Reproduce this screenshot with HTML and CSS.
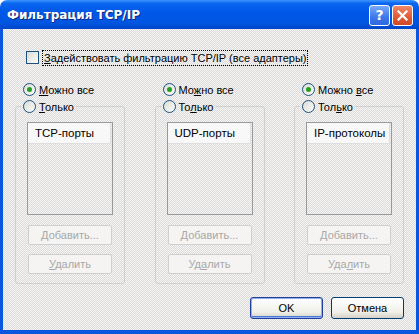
FILE: index.html
```html
<!DOCTYPE html>
<html>
<head>
  <meta charset="UTF-8">
  <title>Фильтрация TCP/IP</title>
  <link rel="stylesheet" href="styles.css">
</head>
<body>
<div class="window">
  <div class="titlebar">
    <span class="caption">Фильтрация TCP/IP</span>
    <div class="capButtons">
      <span class="capBtn help">?</span>
      <span class="capBtn close">
        <svg width="11" height="11" viewBox="0 0 11 11"><path d="M1.5 1.5 L9.5 9.5 M9.5 1.5 L1.5 9.5" stroke="#fff" stroke-width="2.2" stroke-linecap="square"/></svg>
      </span>
    </div>
  </div>
  <div class="client">
    <div class="checkRow">
      <span class="checkbox"></span>
      <span class="focus"><u>З</u>адействовать фильтрацию TCP/IP (все адаптеры)</span>
    </div>

    <div class="columns">
      <div class="column">
        <div class="radioRow"><span class="radio checked"></span><span><u>М</u>ожно все</span></div>
        <fieldset class="group">
          <legend class="radioRow"><span class="radio"></span><span><u>Т</u>олько</span></legend>
          <div class="listbox"><div class="listHead">TCP-порты</div></div>
          <div class="btn disabled">Добавить...</div>
          <div class="btn disabled second"><span><u>У</u>далить</span></div>
        </fieldset>
      </div>
      <div class="column">
        <div class="radioRow"><span class="radio checked"></span><span>Мо<u>ж</u>но все</span></div>
        <fieldset class="group">
          <legend class="radioRow"><span class="radio"></span><span>То<u>л</u>ько</span></legend>
          <div class="listbox"><div class="listHead">UDP-порты</div></div>
          <div class="btn disabled">Добавить...</div>
          <div class="btn disabled second"><span>Уд<u>а</u>лить</span></div>
        </fieldset>
      </div>
      <div class="column">
        <div class="radioRow"><span class="radio checked"></span><span>Можно <u>в</u>се</span></div>
        <fieldset class="group">
          <legend class="radioRow"><span class="radio"></span><span>Тол<u>ь</u>ко</span></legend>
          <div class="listbox"><div class="listHead">IP-протоколы</div></div>
          <div class="btn disabled">Добавить...</div>
          <div class="btn disabled second"><span>Уда<u>л</u>ить</span></div>
        </fieldset>
      </div>
    </div>

    <div class="actions">
      <div class="btn default">OK</div>
      <div class="btn">Отмена</div>
    </div>
  </div>
</div>
</body>
</html>
```

FILE: styles.css
```css
body {
  margin: 0;
  padding: 0;
  background: #ffffff;
  font-family: 'Liberation Sans', Arial, sans-serif;
  font-size: 11px;
  color: #000;
}
.window {
  width: 419px;
  height: 334px;
  display: flex;
  flex-direction: column;
}
.titlebar {
  height: 29px;
  flex: none;
  display: flex;
  align-items: center;
  justify-content: space-between;
  padding: 0 6px 0 7px;
  box-sizing: border-box;
  border-radius: 7px 7px 0 0;
  background: linear-gradient(#3d95ff 0, #0a66f0 12%, #0058e8 40%, #0055e0 80%, #0046c8 100%);
}
.caption {
  color: #fff;
  font-family: 'DejaVu Sans', sans-serif;
  font-weight: bold;
  font-size: 12px;
  text-shadow: 1px 1px 0 #0a2a80;
  padding-top: 1px;
}
.capButtons {
  display: flex;
  gap: 2px;
  padding-top: 1px;
}
.capBtn {
  width: 21px;
  height: 21px;
  box-sizing: border-box;
  border: 1px solid #fff;
  border-radius: 3px;
  display: flex;
  align-items: center;
  justify-content: center;
}
.capBtn.help {
  background: linear-gradient(#7aa8f8, #3c76e8 60%, #3068e0);
  color: #fff;
  font-family: 'DejaVu Sans', sans-serif;
  font-weight: bold;
  font-size: 14px;
}
.capBtn.close {
  background: linear-gradient(#f08868, #e05a34 60%, #d04a28);
}
.client {
  flex: 1;
  border: 3px solid #0a56e0;
  border-top: none;
  border-bottom-width: 4px;
  padding: 21px 12px 0 12px;
  background: repeating-conic-gradient(#dcdbdc 0 25%, #f6f5f4 0 50%) 0 0 / 2px 2px;
}
.checkRow {
  display: flex;
  align-items: center;
  height: 15px;
  padding-left: 11px;
}
.checkbox {
  width: 13px;
  height: 13px;
  box-sizing: border-box;
  border: 1px solid #1c5180;
  background: linear-gradient(135deg, #dcdcd6, #fbfbf9);
  margin-right: 4px;
}
.focus {
  outline: 1px dotted #000;
  padding: 0 1px;
  line-height: 14px;
}
.columns {
  display: flex;
  justify-content: space-between;
  margin-top: 16px;
}
.column {
  width: 110px;
}
.radioRow {
  display: flex;
  align-items: center;
  height: 17px;
  padding-left: 8px;
}
.radio {
  width: 13px;
  height: 13px;
  box-sizing: border-box;
  border-radius: 50%;
  border: 1px solid #1c5180;
  background: linear-gradient(135deg, #dcdcd6, #fbfbf9);
  margin-right: 3px;
  display: flex;
  align-items: center;
  justify-content: center;
}
.radio.checked::after {
  content: '';
  width: 5px;
  height: 5px;
  border-radius: 50%;
  background: #22a022;
}
.group {
  margin: 0;
  padding: 0 11px 9px 11px;
  border: 1px solid #d0d0cc;
  border-radius: 3px;
  min-width: 0;
}
.group legend.radioRow {
  padding: 0 2px 0 2px;
  margin-left: -6px;
}
.listbox {
  margin-top: 7px;
  height: 93px;
  box-sizing: border-box;
  border: 1px solid #9a9a9a;
}
.listHead {
  height: 20px;
  line-height: 20px;
  padding-left: 7px;
  font-size: 11.5px;
  white-space: nowrap;
  overflow: hidden;
  background: #f8f8f8;
  border-bottom: 1px solid #dedede;
  border-right: 1px solid #dedede;
  margin-right: 1px;
}
.btn {
  height: 21px;
  box-sizing: border-box;
  display: flex;
  align-items: center;
  justify-content: center;
  border: 1px solid #003c74;
  border-radius: 3px;
  background: linear-gradient(#ffffff, #f0f0ea 70%, #d6d0c5);
}
.btn.disabled {
  margin: 10px 1px 0 1px;
  height: 20px;
  color: #a8a8a8;
  border-color: #cfcfcf;
  border-radius: 2px;
  background: #f5f4f2;
}
.btn.second {
  margin-top: 9px;
}
.actions {
  display: flex;
  justify-content: flex-end;
  gap: 8px;
  margin-top: 13px;
}
.actions .btn {
  width: 73px;
  height: 22px;
}
.btn.default {
  border-color: #1f3f9a;
  box-shadow: inset 0 0 0 1px #8eaff0, inset 0 -1px 0 1px #4a76d8;
}
```
